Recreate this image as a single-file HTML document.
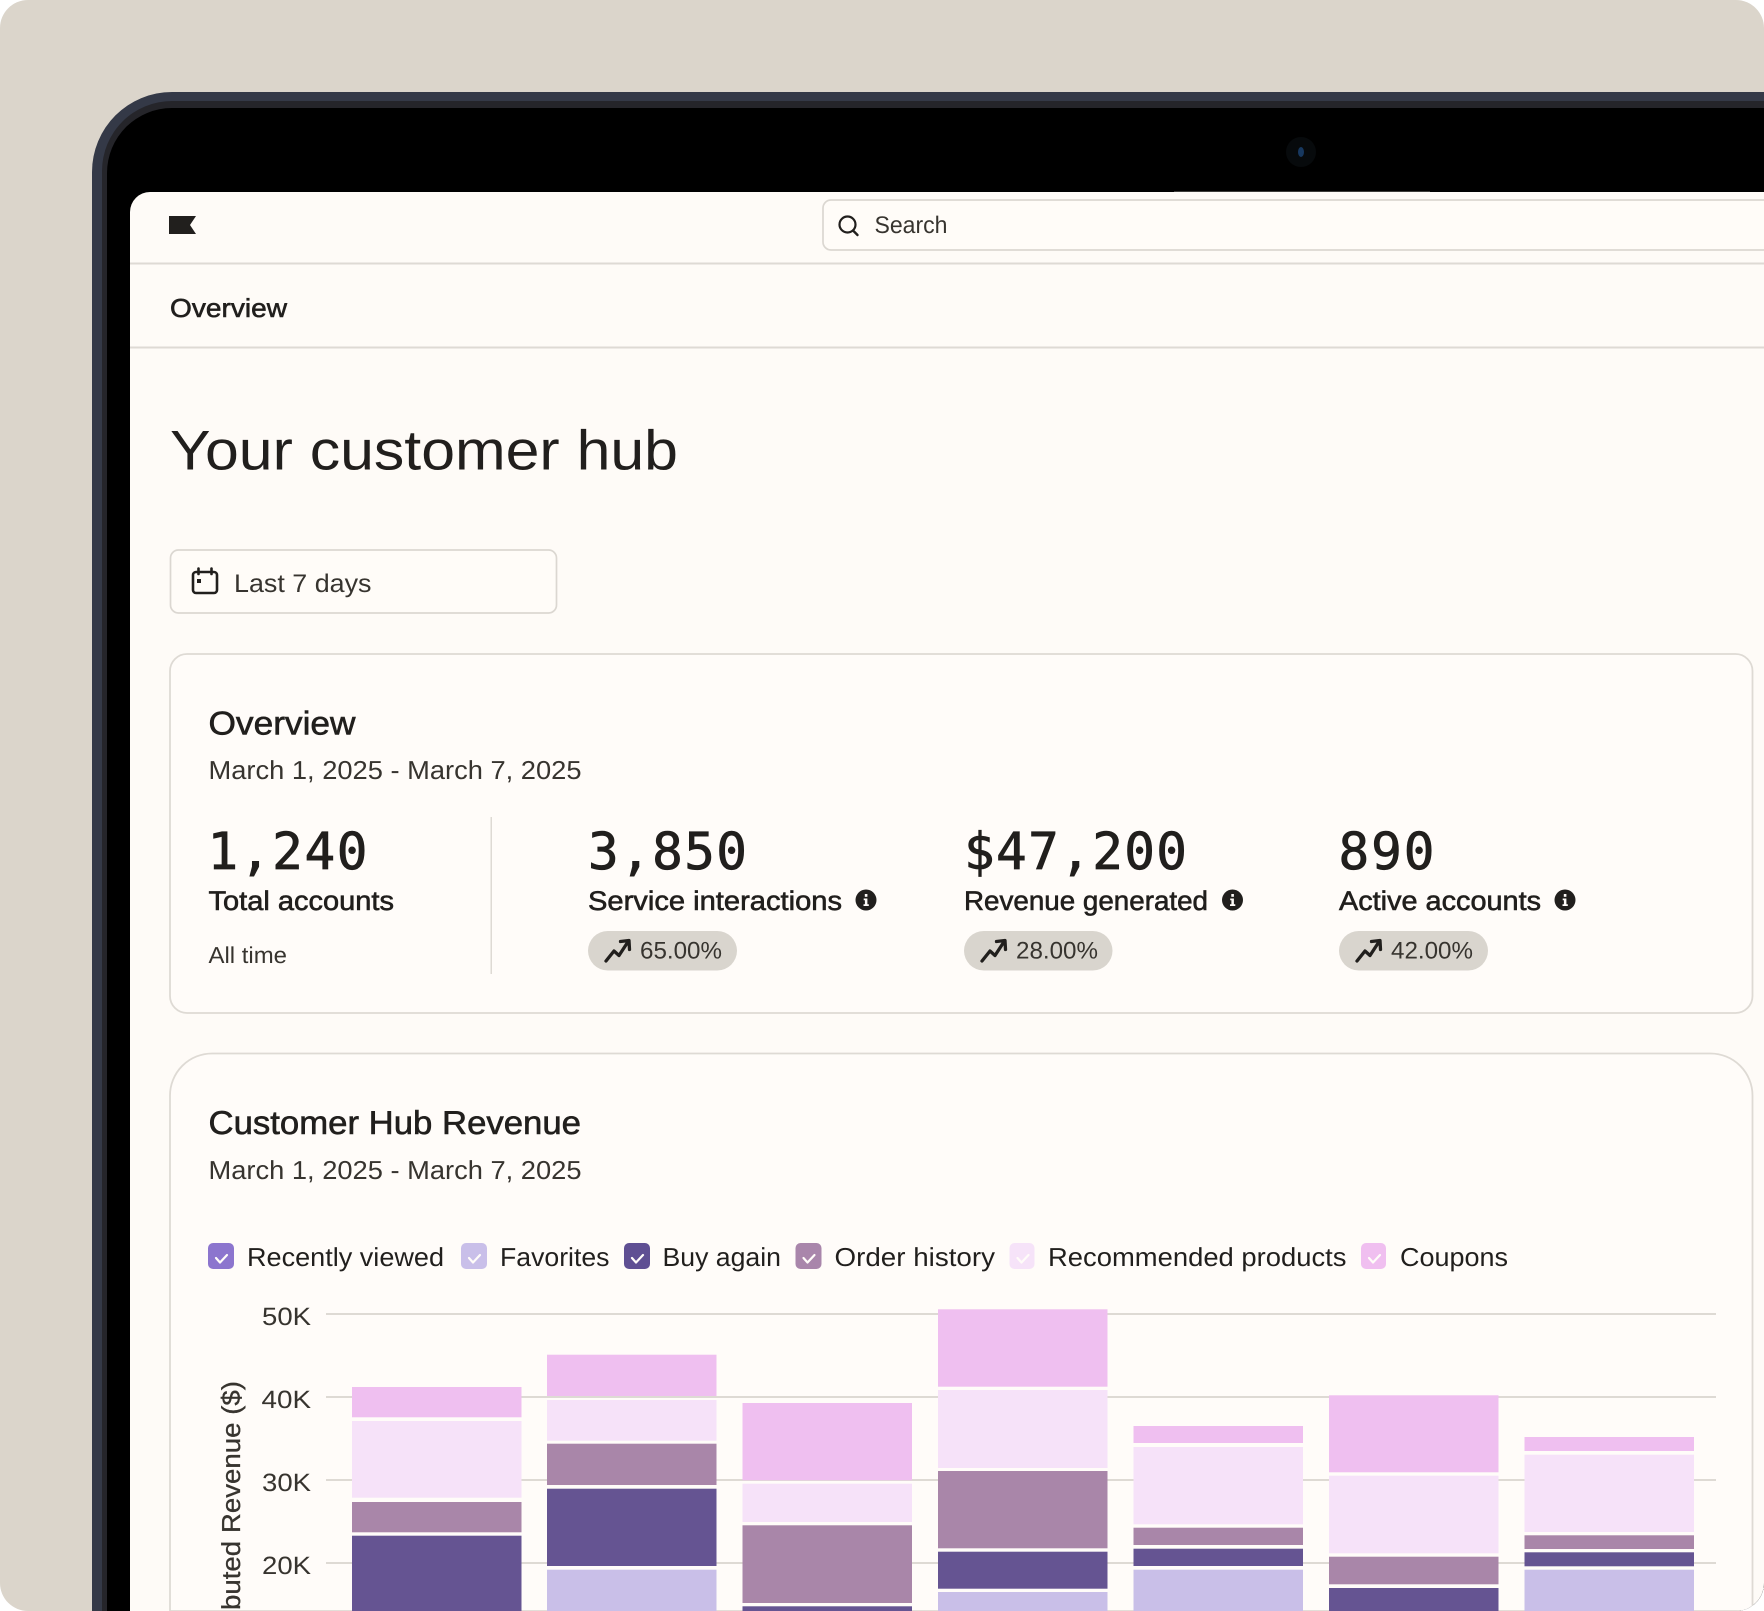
<!DOCTYPE html>
<html><head><meta charset="utf-8"><title>Your customer hub</title>
<style>
html,body{margin:0;padding:0;background:#fff;width:1764px;height:1611px;overflow:hidden}
svg{display:block}
text{font-family:"Liberation Sans",sans-serif;fill:#211f1d;text-rendering:geometricPrecision}
.m{stroke:#211f1d;stroke-width:.6px}
.n{font-family:"DejaVu Sans Mono","Liberation Mono",monospace;font-size:51px;stroke:#211f1d;stroke-width:.8px}
.l{font-size:27px}
.p{font-size:24px;fill:#37342f}
.a{font-size:25px;fill:#37342f}
.lg{font-size:26px}
</style></head>
<body>
<svg width="1764" height="1611" viewBox="0 0 1764 1611" xmlns="http://www.w3.org/2000/svg">
<defs>
<clipPath id="pg"><rect x="0" y="0" width="1764" height="1611" rx="28"/></clipPath>
<clipPath id="sc"><path d="M150 192H1764V1611H130V212A20 20 0 0 1 150 192Z"/></clipPath>
</defs>
<g clip-path="url(#pg)">
<rect width="1764" height="1611" fill="#dbd5cb"/>
<!-- device -->
<path d="M1764 92H172A80 80 0 0 0 92 172V1611H1764Z" fill="#343947"/>
<path d="M1764 101H172A70 70 0 0 0 102 171V1611H1764Z" fill="#25252a"/>
<path d="M1764 108H172A65 65 0 0 0 107 173V1611H1764Z" fill="#000"/>
<circle cx="1301" cy="152" r="15" fill="#070a0c"/>
<ellipse cx="1301" cy="152" rx="3" ry="5" fill="#17385f"/>
<rect x="1174" y="191" width="256" height="2" fill="#3d3d3a"/>
<!-- screen -->
<path d="M150 192H1764V1611H130V212A20 20 0 0 1 150 192Z" fill="#fefbf7"/>
<g clip-path="url(#sc)">
<rect x="130" y="262.500" width="1634" height="2" fill="#dedad4"/>
<rect x="130" y="346.500" width="1634" height="2" fill="#dedad4"/>
<polygon points="169,216 196,216 190,225 196,234 169,234" fill="#211f1d"/>
<path d="M1764 200H831A8 8 0 0 0 823 208V242A8 8 0 0 0 831 250H1764" fill="#fffcf8" stroke="#dbd7d1" stroke-width="1.700"/>
<circle cx="847.500" cy="224.500" r="8" fill="none" stroke="#211f1d" stroke-width="2.200"/>
<path d="M853 230.500L857.500 235" stroke="#211f1d" stroke-width="2.400" stroke-linecap="round"/>
<text x="874.500" y="233" font-size="24" textLength="73" lengthAdjust="spacingAndGlyphs" style="fill:#37342f">Search</text>
<text x="170" y="317" font-size="26" textLength="117" lengthAdjust="spacingAndGlyphs" class="m">Overview</text>
<text x="170" y="469.500" font-size="56" textLength="508" lengthAdjust="spacingAndGlyphs">Your customer hub</text>

<rect x="170.500" y="550" width="386" height="63" rx="8" fill="#fffcf8" stroke="#dbd7d1" stroke-width="1.700"/>
<rect x="193" y="572" width="24" height="21" rx="3" fill="none" stroke="#211f1d" stroke-width="2.600"/>
<path d="M198.500 568.500V574M211.500 568.500V574" stroke="#211f1d" stroke-width="2.600" stroke-linecap="round"/>
<rect x="197" y="579" width="4" height="4" fill="#211f1d"/>
<text x="234" y="592" font-size="25.500" textLength="137.500" lengthAdjust="spacingAndGlyphs" style="fill:#37342f">Last 7 days</text>

<!-- card 1 -->
<rect x="170" y="654" width="1582.500" height="359" rx="17" fill="#fffcf9" stroke="#dedad4" stroke-width="1.800"/>
<text x="208.500" y="734.500" font-size="33" textLength="147" lengthAdjust="spacingAndGlyphs" class="m">Overview</text>
<text x="208.500" y="779" font-size="26" textLength="373" lengthAdjust="spacingAndGlyphs" style="fill:#37342f">March 1, 2025 - March 7, 2025</text>
<rect x="490.500" y="817" width="1.500" height="157" fill="#dedad4"/>

<text x="207.500" y="869" class="n" textLength="160">1,240</text>
<text x="588" y="869" class="n" textLength="159">3,850</text>
<text x="964" y="869" class="n" textLength="223">$47,200</text>
<text x="1338.500" y="869" class="n" textLength="96">890</text>

<text x="208.500" y="910" class="l m" textLength="185.500" lengthAdjust="spacingAndGlyphs">Total accounts</text>
<text x="588" y="910" class="l m" textLength="254" lengthAdjust="spacingAndGlyphs">Service interactions</text>
<text x="964" y="910" class="l m" textLength="244" lengthAdjust="spacingAndGlyphs">Revenue generated</text>
<text x="1339" y="910" class="l m" textLength="202" lengthAdjust="spacingAndGlyphs">Active accounts</text>

<g><circle cx="866" cy="900" r="10.500" fill="#211f1d"/><rect x="864.800" y="894" width="2.600" height="2.800" fill="#fffcf9"/><path d="M863.700 898.500H867.400V904.300H868.800V906H863.500V904.300H864.900V900.200H863.700Z" fill="#fffcf9"/></g>
<g transform="translate(366.500 0)"><circle cx="866" cy="900" r="10.500" fill="#211f1d"/><rect x="864.800" y="894" width="2.600" height="2.800" fill="#fffcf9"/><path d="M863.700 898.500H867.400V904.300H868.800V906H863.500V904.300H864.900V900.200H863.700Z" fill="#fffcf9"/></g>
<g transform="translate(699 0)"><circle cx="866" cy="900" r="10.500" fill="#211f1d"/><rect x="864.800" y="894" width="2.600" height="2.800" fill="#fffcf9"/><path d="M863.700 898.500H867.400V904.300H868.800V906H863.500V904.300H864.900V900.200H863.700Z" fill="#fffcf9"/></g>

<text x="208.500" y="963" font-size="23" textLength="78.500" lengthAdjust="spacingAndGlyphs" style="fill:#37342f">All time</text>

<g>
<rect x="588" y="931" width="149" height="39.500" rx="19.750" fill="#d9d5ce"/>
<path d="M606 961L614 951L619 955.500L627.500 942.500M620.500 941.500L629 940.500L629.500 949.500" fill="none" stroke="#211f1d" stroke-width="3.300" stroke-linecap="round" stroke-linejoin="round"/>
<text x="640" y="958.500" class="p" textLength="82" lengthAdjust="spacingAndGlyphs">65.00%</text>
</g>
<g transform="translate(376 0)">
<rect x="588" y="931" width="148.500" height="39.500" rx="19.750" fill="#d9d5ce"/>
<path d="M606 961L614 951L619 955.500L627.500 942.500M620.500 941.500L629 940.500L629.500 949.500" fill="none" stroke="#211f1d" stroke-width="3.300" stroke-linecap="round" stroke-linejoin="round"/>
<text x="640" y="958.500" class="p" textLength="82" lengthAdjust="spacingAndGlyphs">28.00%</text>
</g>
<g transform="translate(751 0)">
<rect x="588" y="931" width="149" height="39.500" rx="19.750" fill="#d9d5ce"/>
<path d="M606 961L614 951L619 955.500L627.500 942.500M620.500 941.500L629 940.500L629.500 949.500" fill="none" stroke="#211f1d" stroke-width="3.300" stroke-linecap="round" stroke-linejoin="round"/>
<text x="640" y="958.500" class="p" textLength="82" lengthAdjust="spacingAndGlyphs">42.00%</text>
</g>

<!-- card 2 -->
<path d="M170 1611V1095.500A42 42 0 0 1 212 1053.500H1710.500A42 42 0 0 1 1752.500 1095.500V1611Z" fill="#fffcf9" stroke="#dedad4" stroke-width="1.800"/>
<text x="208.500" y="1134" font-size="33" textLength="372.500" lengthAdjust="spacingAndGlyphs" class="m">Customer Hub Revenue</text>
<text x="208.500" y="1179" font-size="26" textLength="373" lengthAdjust="spacingAndGlyphs" style="fill:#37342f">March 1, 2025 - March 7, 2025</text>

<!-- legend -->
<g fill="none" stroke="#fffcf9" stroke-width="2.200" stroke-linecap="round" stroke-linejoin="round">
<rect x="208" y="1243" width="26" height="26" rx="5" fill="#8c75ce" stroke="none"/><path d="M216 1258L220 1262.500L227 1255"/>
<rect x="461" y="1243" width="26" height="26" rx="5" fill="#c9bfe9" stroke="none"/><path d="M469 1258L473 1262.500L480 1255"/>
<rect x="624" y="1243" width="26" height="26" rx="5" fill="#5f4f93" stroke="none"/><path d="M632 1258L636 1262.500L643 1255"/>
<rect x="795.500" y="1243" width="26" height="26" rx="5" fill="#a986ab" stroke="none"/><path d="M803.500 1258L807.500 1262.500L814.500 1255"/>
<rect x="1009.500" y="1243" width="25" height="26" rx="5" fill="#f6e3f9" stroke="none"/><path d="M1017.500 1258L1021.500 1262.500L1028.500 1255"/>
<rect x="1361" y="1243" width="25" height="26" rx="5" fill="#f0bff0" stroke="none"/><path d="M1369 1258L1373 1262.500L1380 1255"/>
</g>
<text x="247" y="1266" class="lg" textLength="197" lengthAdjust="spacingAndGlyphs">Recently viewed</text>
<text x="500" y="1266" class="lg" textLength="109.500" lengthAdjust="spacingAndGlyphs">Favorites</text>
<text x="662.500" y="1266" class="lg" textLength="118.500" lengthAdjust="spacingAndGlyphs">Buy again</text>
<text x="834.500" y="1266" class="lg" textLength="160.500" lengthAdjust="spacingAndGlyphs">Order history</text>
<text x="1048" y="1266" class="lg" textLength="298.500" lengthAdjust="spacingAndGlyphs">Recommended products</text>
<text x="1400" y="1266" class="lg" textLength="108" lengthAdjust="spacingAndGlyphs">Coupons</text>

<!-- grid -->
<g fill="#dedad4">
<rect x="326" y="1313" width="1390" height="2"/>
<rect x="326" y="1396" width="1390" height="2"/>
<rect x="326" y="1479" width="1390" height="2"/>
<rect x="326" y="1562" width="1390" height="2"/>
</g>
<text x="262" y="1325" class="a" textLength="49" lengthAdjust="spacingAndGlyphs">50K</text>
<text x="261.500" y="1408" class="a" textLength="49.500" lengthAdjust="spacingAndGlyphs">40K</text>
<text x="262" y="1491" class="a" textLength="49" lengthAdjust="spacingAndGlyphs">30K</text>
<text x="262" y="1574" class="a" textLength="49" lengthAdjust="spacingAndGlyphs">20K</text>
<text transform="translate(240 1610) rotate(-90)" font-size="26" textLength="229" lengthAdjust="spacingAndGlyphs" style="fill:#37342f;stroke:#37342f;stroke-width:.3px">buted Revenue ($)</text>

<!-- bars -->
<g fill="#efbff0">
<rect x="352" y="1387" width="169.500" height="30.300"/>
<rect x="547" y="1354.700" width="169.500" height="41.300"/>
<rect x="742.500" y="1403" width="169.500" height="77.300"/>
<rect x="938" y="1309.300" width="169.500" height="77.400"/>
<rect x="1133.500" y="1426" width="169.500" height="17"/>
<rect x="1329" y="1395.300" width="169.500" height="77"/>
<rect x="1524.500" y="1437" width="169.500" height="14"/>
</g>
<g fill="#f6e2f9">
<rect x="352" y="1421" width="169.500" height="76.700"/>
<rect x="547" y="1400" width="169.500" height="40.700"/>
<rect x="742.500" y="1483.700" width="169.500" height="38.300"/>
<rect x="938" y="1390" width="169.500" height="78"/>
<rect x="1133.500" y="1447" width="169.500" height="77.300"/>
<rect x="1329" y="1475.700" width="169.500" height="77.600"/>
<rect x="1524.500" y="1454.700" width="169.500" height="77.300"/>
</g>
<g fill="#a986a9">
<rect x="352" y="1502" width="169.500" height="30.300"/>
<rect x="547" y="1443.700" width="169.500" height="41.300"/>
<rect x="742.500" y="1525.300" width="169.500" height="77.700"/>
<rect x="938" y="1471" width="169.500" height="77.300"/>
<rect x="1133.500" y="1527.700" width="169.500" height="17.300"/>
<rect x="1329" y="1556.700" width="169.500" height="27.600"/>
<rect x="1524.500" y="1535.300" width="169.500" height="13.700"/>
</g>
<g fill="#655492">
<rect x="352" y="1535.700" width="169.500" height="75.300"/>
<rect x="547" y="1488.700" width="169.500" height="77.300"/>
<rect x="742.500" y="1606.300" width="169.500" height="4.700"/>
<rect x="938" y="1551.700" width="169.500" height="37"/>
<rect x="1133.500" y="1548.700" width="169.500" height="17.300"/>
<rect x="1329" y="1588" width="169.500" height="23"/>
<rect x="1524.500" y="1552.300" width="169.500" height="14"/>
</g>
<g fill="#c9bfe8">
<rect x="547" y="1569.700" width="169.500" height="41.300"/>
<rect x="938" y="1592" width="169.500" height="19"/>
<rect x="1133.500" y="1569.700" width="169.500" height="41.300"/>
<rect x="1524.500" y="1569.700" width="169.500" height="41.300"/>
</g>
</g>
</g>
</svg>
</body></html>
